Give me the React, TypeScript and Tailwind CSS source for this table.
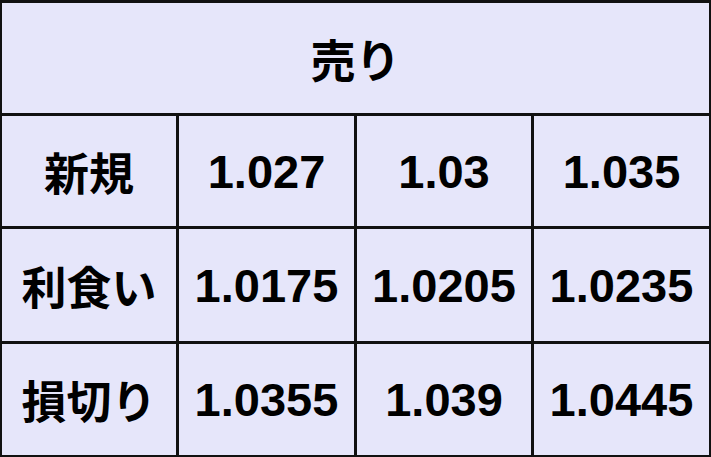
const rows = [
	{ label: "新規", values: ["1.027", "1.03", "1.035"] },
	{ label: "利食い", values: ["1.0175", "1.0205", "1.0235"] },
	{ label: "損切り", values: ["1.0355", "1.039", "1.0445"] },
];

const jpFont = "[font-family:'Noto_Sans_CJK_JP',sans-serif]";

function App() {
	return (
		<div className="w-[711px] h-[457px] bg-[#111111] pt-[3px] px-[2px] pb-[2px]">
			<div className="grid h-full grid-cols-[174px_175px_174px_175px] grid-rows-[110px_110px_112px_111px] gap-[3px] text-black">
				<div
					className={`col-span-4 flex items-center justify-center bg-[#e6e6fa] text-[45px] font-bold leading-none ${jpFont}`}
				>
					売り
				</div>
				{rows.map((row) => (
					<div key={row.label} className="contents">
						<div
							className={`flex items-center justify-center bg-[#e6e6fa] text-[45px] font-bold leading-none ${jpFont}`}
						>
							{row.label}
						</div>
						{row.values.map((v, i) => (
							<div
								key={i}
								className="flex items-center justify-center bg-[#e6e6fa] font-['Liberation_Sans',Arial,sans-serif] text-[47px] font-bold leading-none"
							>
								{v}
							</div>
						))}
					</div>
				))}
			</div>
		</div>
	);
}

export default App;
